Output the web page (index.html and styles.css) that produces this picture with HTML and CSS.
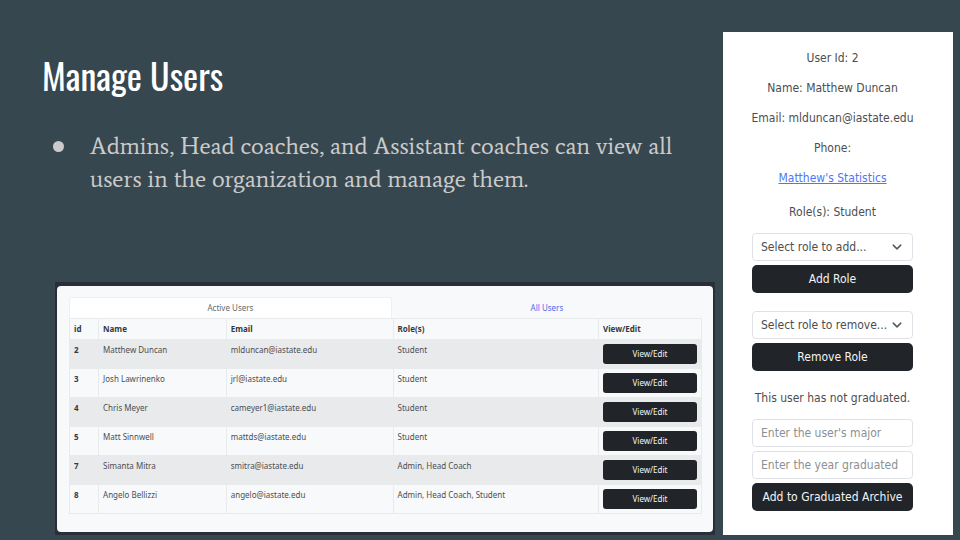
FILE: index.html
```html
<!DOCTYPE html>
<html lang="en">
<head>
<meta charset="utf-8">
<meta name="viewport" content="width=device-width, initial-scale=1">
<title>Manage Users</title>
<link rel="stylesheet" href="styles.css">
</head>
<body>
<div class="slide">
  <main class="main">
    <header class="intro">
      <h1>Manage Users</h1>
      <ul class="points">
        <li>Admins, Head coaches, and Assistant coaches can view all users in the organization and manage them.</li>
      </ul>
    </header>
    <div class="frame">
      <section class="card">
        <nav class="tabs">
          <a class="tab tab-active" href="#active">Active Users</a>
          <a class="tab" href="#all">All Users</a>
        </nav>
        <table class="users">
          <colgroup>
            <col class="col-id"><col class="col-name"><col class="col-email"><col class="col-role"><col class="col-edit">
          </colgroup>
          <thead>
            <tr><th scope="col">id</th><th scope="col">Name</th><th scope="col">Email</th><th scope="col">Role(s)</th><th scope="col">View/Edit</th></tr>
          </thead>
          <tbody>
            <tr><th scope="row">2</th><td>Matthew Duncan</td><td>mlduncan@iastate.edu</td><td>Student</td><td><button class="btn btn-small" type="button">View/Edit</button></td></tr>
            <tr><th scope="row">3</th><td>Josh Lawrinenko</td><td>jrl@iastate.edu</td><td>Student</td><td><button class="btn btn-small" type="button">View/Edit</button></td></tr>
            <tr><th scope="row">4</th><td>Chris Meyer</td><td>cameyer1@iastate.edu</td><td>Student</td><td><button class="btn btn-small" type="button">View/Edit</button></td></tr>
            <tr><th scope="row">5</th><td>Matt Sinnwell</td><td>mattds@iastate.edu</td><td>Student</td><td><button class="btn btn-small" type="button">View/Edit</button></td></tr>
            <tr><th scope="row">7</th><td>Simanta Mitra</td><td>smitra@iastate.edu</td><td>Admin, Head Coach</td><td><button class="btn btn-small" type="button">View/Edit</button></td></tr>
            <tr><th scope="row">8</th><td>Angelo Bellizzi</td><td>angelo@iastate.edu</td><td>Admin, Head Coach, Student</td><td><button class="btn btn-small" type="button">View/Edit</button></td></tr>
          </tbody>
        </table>
      </section>
    </div>
  </main>
  <aside class="panel">
    <div class="details">
      <p>User Id: 2</p>
      <p>Name: Matthew Duncan</p>
      <p>Email: mlduncan@iastate.edu</p>
      <p>Phone:</p>
      <p><a href="#statistics">Matthew's Statistics</a></p>
    </div>
    <form class="group">
      <label class="caption" for="add-role">Role(s): Student</label>
      <select class="field select" id="add-role"><option>Select role to add...</option></select>
      <button class="btn" type="button">Add Role</button>
    </form>
    <form class="group">
      <select class="field select" aria-label="Role to remove"><option>Select role to remove...</option></select>
      <button class="btn" type="button">Remove Role</button>
    </form>
    <form class="group">
      <p class="caption">This user has not graduated.</p>
      <input class="field" type="text" aria-label="Major" placeholder="Enter the user's major">
      <input class="field" type="text" aria-label="Year graduated" placeholder="Enter the year graduated">
      <button class="btn" type="button">Add to Graduated Archive</button>
    </form>
  </aside>
</div>
</body>
</html>
```
FILE: styles.css
```css
* {
  box-sizing: border-box;
}

body {
  margin: 0;
  background: #37474f;
  color: #4b4e52;
  font-family: Tahoma, "DejaVu Sans Condensed", "Noto Sans", sans-serif;
  font-size: 12px;
  line-height: 18px;
}

p, h1, ul {
  margin: 0;
}

.slide {
  display: grid;
  grid-template-columns: minmax(0, 1fr) 230px;
  gap: 8px;
  min-height: 100vh;
  padding: 32px 7px 5px 55px;
}

.main {
  display: flex;
  flex-direction: column;
  justify-content: space-between;
}

.intro {
  margin-left: -13px;
  padding-top: 12px;
}

h1 {
  color: #fff;
  font-family: Oswald, "Liberation Sans Narrow", sans-serif;
  font-size: 36px;
  font-weight: 400;
  line-height: 62px;
}

.points {
  list-style: none;
  padding: 23px 24px 0 48px;
  color: #cacaca;
  font-family: Average, "Liberation Serif", serif;
  font-size: 24px;
  line-height: 33px;
}

.points li {
  position: relative;
}

.points li::before {
  content: "";
  position: absolute;
  top: 12px;
  left: -37px;
  width: 11px;
  height: 11px;
  border-radius: 50%;
  background: #cacaca;
}

.frame {
  padding: 4px 2px 3px;
  background: #292f38;
}

.card {
  padding: 11px 11px 18px 12px;
  border-radius: 4px;
  background: #f8f9fb;
  font-family: "Noto Sans", sans-serif;
  font-size: 8px;
  line-height: 12px;
}

.tabs {
  display: grid;
  grid-template-columns: 51% 49%;
}

.tab {
  padding: 4px;
  border: 1px solid transparent;
  border-bottom: 0;
  border-radius: 3px 3px 0 0;
  color: #4a6cf0;
  text-align: center;
  text-decoration: none;
}

.tab-active {
  border-color: #eef0f2;
  background: #fff;
  color: #66696d;
}

.users {
  width: 100%;
  table-layout: fixed;
  border-collapse: collapse;
}

.col-id { width: 4.6%; }
.col-name { width: 20.2%; }
.col-email { width: 26.4%; }
.col-role { width: 32.5%; }
.col-edit { width: 16.3%; }

.users th,
.users td {
  padding: 4px;
  border: 1px solid #e8eaec;
  text-align: left;
  vertical-align: top;
}

.users th {
  color: #35383c;
  font-weight: 700;
}

.users tbody tr:nth-child(odd) {
  background: #e9eaec;
}

.btn {
  display: block;
  width: 100%;
  height: 28px;
  padding: 0 4px;
  border: 0;
  border-radius: 5px;
  background: #212529;
  color: #f4f4f4;
  font: inherit;
  text-align: center;
}

.btn-small {
  height: 20px;
  border-radius: 3px;
}

.panel {
  padding: 17px 40px 20px 29px;
  background: #fff;
  text-align: center;
}

.details {
  display: grid;
  grid-template-columns: minmax(0, 1fr);
  gap: 12px;
  margin: 0 -12px 16px;
  white-space: nowrap;
}

.details a {
  color: #4f76f6;
}

.group {
  display: grid;
  grid-template-columns: minmax(0, 1fr);
  gap: 4px;
  margin-bottom: 18px;
}

.group:last-child {
  margin-bottom: 0;
}

.caption {
  margin-bottom: 8px;
  white-space: nowrap;
}

.field {
  width: 100%;
  height: 28px;
  padding: 0 8px;
  border: 1px solid #dee2e6;
  border-radius: 4px;
  background: #fff;
  color: #4b4e52;
  font: inherit;
}

.field::placeholder {
  color: #8b9095;
  opacity: 1;
}

.select {
  appearance: none;
  padding-right: 20px;
  background: #fff url("data:image/svg+xml,%3Csvg xmlns='http://www.w3.org/2000/svg' viewBox='0 0 16 16'%3E%3Cpath fill='none' stroke='%23555a60' stroke-linecap='round' stroke-linejoin='round' stroke-width='2.4' d='m2 5 6 6 6-6'/%3E%3C/svg%3E") no-repeat right 10px center / 10px 10px;
}
```
